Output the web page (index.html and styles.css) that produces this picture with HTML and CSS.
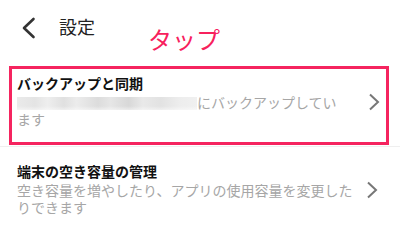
FILE: index.html
```html
<!DOCTYPE html>
<html lang="ja">
<head>
<meta charset="utf-8">
<link rel="stylesheet" href="styles.css">
</head>
<body>
<header class="header">
  <svg class="back" width="15" height="22" viewBox="0 0 15 22"><path d="M12.5 2 L3 11 L12.5 20" fill="none" stroke="#333" stroke-width="2.6" stroke-linecap="round" stroke-linejoin="round"/></svg>
  <div class="title">設定</div>
  <div class="tap">タップ</div>
</header>
<div class="item highlight">
  <div class="text">
    <div class="item-title">バックアップと同期</div>
    <div class="item-sub"><span class="blur"></span>にバックアップしてい<br>ます</div>
  </div>
  <svg class="chev" width="12" height="18" viewBox="0 0 12 18"><path d="M2 1.5 L10 9 L2 16.5" fill="none" stroke="#777" stroke-width="2"/></svg>
</div>
<div class="sep"></div>
<div class="item">
  <div class="text">
    <div class="item-title">端末の空き容量の管理</div>
    <div class="item-sub">空き容量を増やしたり、アプリの使用容量を変更したりできます</div>
  </div>
  <svg class="chev" width="12" height="18" viewBox="0 0 12 18"><path d="M2 1.5 L10 9 L2 16.5" fill="none" stroke="#777" stroke-width="2"/></svg>
</div>
</body>
</html>
```
FILE: styles.css
```css
html, body {
  margin: 0;
  padding: 0;
  background: #fff;
  font-family: "Noto Sans CJK JP", "Noto Sans", sans-serif;
  width: 400px;
  height: 233px;
  overflow: hidden;
}
.header {
  display: flex;
  align-items: flex-start;
  height: 66px;
}
.back {
  margin-left: 21px;
  margin-top: 17px;
  flex: none;
}
.title {
  margin-left: 23px;
  margin-top: 17px;
  font-size: 18px;
  line-height: 18px;
  color: #222;
}
.tap {
  margin-left: 53px;
  margin-top: 27px;
  font-size: 24px;
  line-height: 24px;
  color: #f7215d;
}
.item {
  display: flex;
  align-items: center;
  padding: 16px 0 15px 17px;
}
.item.highlight {
  margin: 0 11px 0 9px;
  border: 3px solid #f5245f;
  padding: 6px 0 14px 5px;
}
.text {
  width: 338px;
}
.item-title {
  font-size: 14px;
  line-height: 17px;
  font-weight: bold;
  color: #111;
  margin-bottom: 2px;
}
.item-sub {
  font-size: 14px;
  line-height: 17px;
  color: #a6a6a6;
}
.blur {
  display: inline-block;
  width: 180px;
  height: 13px;
  vertical-align: -2px;
  background:
    linear-gradient(180deg, rgba(255,255,255,0) 0, rgba(255,255,255,0) 30%, rgba(255,255,255,0.0) 70%, rgba(255,255,255,0.5) 100%),
    linear-gradient(90deg, #eaeaea 0, #e4e4e4 10%, #eeeeee 17%, #e0e0e0 26%, #ececec 33%, #dcdcdc 45%, #e6e6e6 52%, #d8d8d8 62%, #e9e9e9 70%, #e2e2e2 80%, #ededed 90%, #f0f0f0 100%);
}
.chev {
  flex: none;
  margin-left: 11px;
}
.highlight .chev {
  margin-left: 13px;
}
.sep {
  height: 1px;
  background: #efefef;
  margin-top: 1px;
}
```
